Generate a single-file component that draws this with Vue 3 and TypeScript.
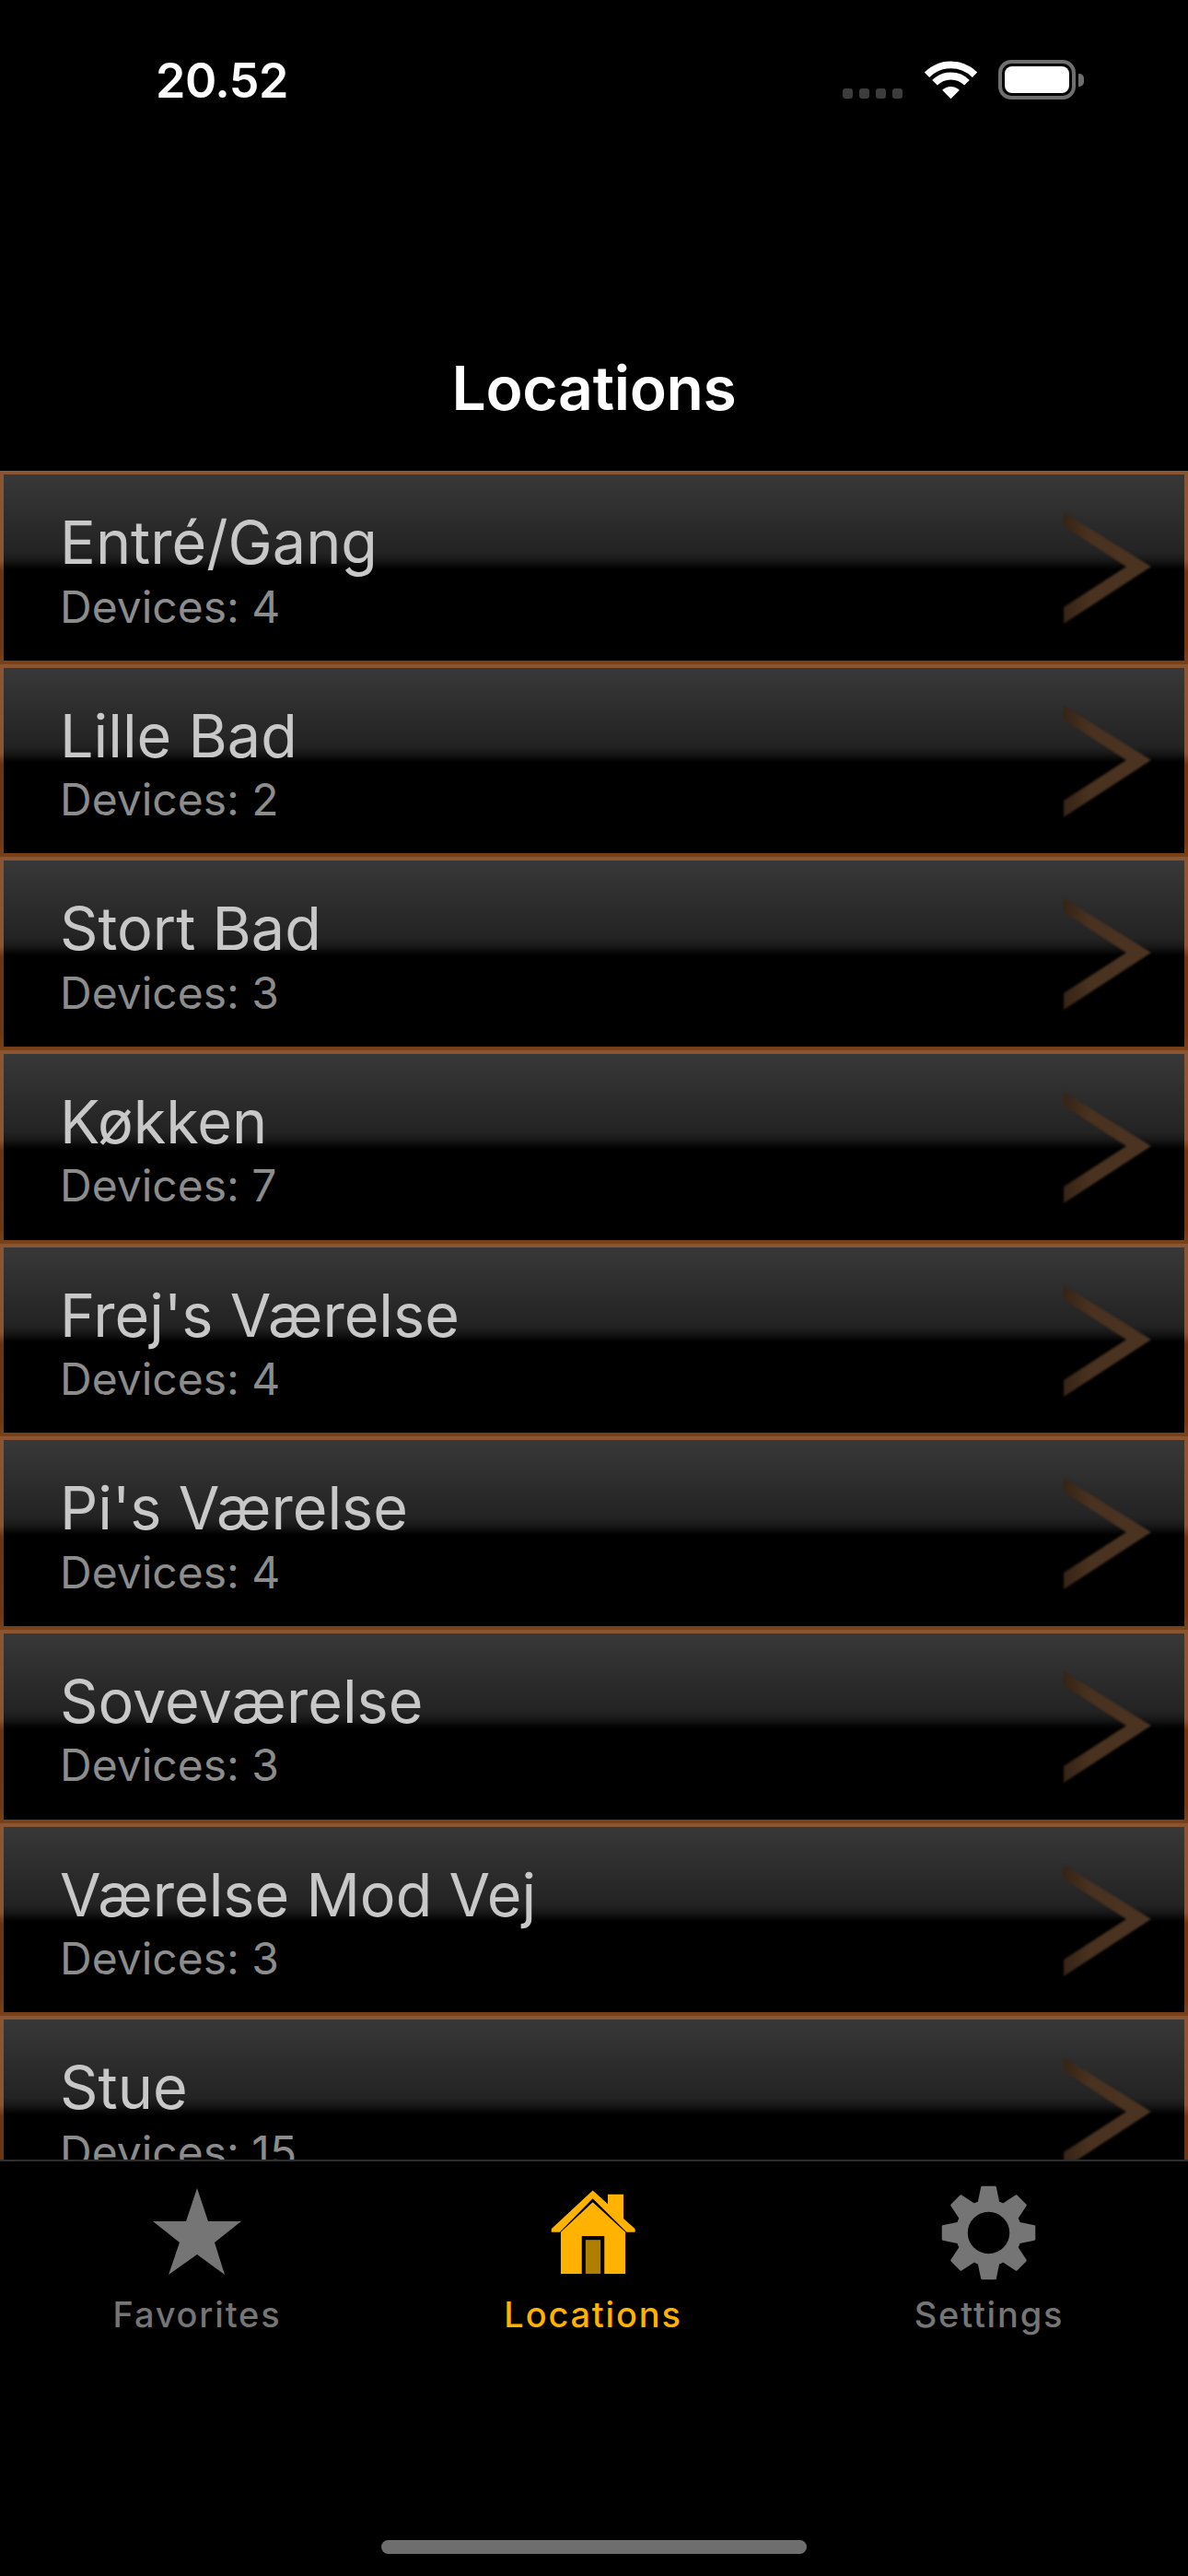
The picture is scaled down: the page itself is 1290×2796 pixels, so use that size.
<script setup lang="ts">
interface Loc { name: string; devices: number }
const locations: Loc[] = [
  { name: 'Entré/Gang', devices: 4 },
  { name: 'Lille Bad', devices: 2 },
  { name: 'Stort Bad', devices: 3 },
  { name: 'Køkken', devices: 7 },
  { name: "Frej's Værelse", devices: 4 },
  { name: "Pi's Værelse", devices: 4 },
  { name: 'Soveværelse', devices: 3 },
  { name: 'Værelse Mod Vej', devices: 3 },
  { name: 'Stue', devices: 15 },
]
const toothAngles = [0, 45, 90, 135, 180, 225, 270, 315]
</script>

<template>
  <div class="screen">
    <header class="status">
      <span class="time">20.52</span>
      <div class="indicators">
        <div class="dots"><i></i><i></i><i></i><i></i></div>
        <svg class="wifi" viewBox="372 77 172 124">
          <path d="M379.5 121.5A111 111 0 0 1 536.5 121.5" fill="none" stroke="#fff" stroke-width="23" />
          <path d="M405.3 147.3A74.5 74.5 0 0 1 510.7 147.3" fill="none" stroke="#fff" stroke-width="24" />
          <path d="M458 200L429.7 171.7A40 40 0 0 1 486.3 171.7Z" fill="#fff" />
        </svg>
        <div class="battery"><div class="charge"></div></div>
        <div class="cap"></div>
      </div>
    </header>
    <div class="nav">Locations</div>
    <main class="list">
      <div v-for="l in locations" :key="l.name" class="row">
        <div class="labels">
          <div class="name">{{ l.name }}</div>
          <div class="devices">Devices: {{ l.devices }}</div>
        </div>
        <svg class="chevron" viewBox="0 0 95 122">
          <defs>
            <linearGradient id="chev" x1="0" y1="0" x2="1" y2="0">
              <stop offset="0" stop-color="#362415" />
              <stop offset="0.3" stop-color="#49321f" />
              <stop offset="1" stop-color="#4b3421" />
            </linearGradient>
          </defs>
          <polygon points="0,0 95,59 0,121 0,103 68,59 0,15" fill="url(#chev)" />
        </svg>
      </div>
    </main>
    <nav class="tabs">
      <div class="tab">
        <svg class="tab-icon" viewBox="0 0 96 96">
          <polygon points="47,0 59,36 95,36 66,59 77,94 47,72 16,94 28,59 -1,36 35,36" fill="#757575" transform="translate(1 0)" />
        </svg>
        <span>Favorites</span>
      </div>
      <div class="tab active">
        <svg class="tab-icon" viewBox="350 165 282 282">
          <path d="M490 172L538 216V185H588V262L625 295V305H598L490 198L385 305H358V295Z" fill="#ffb300" />
          <path d="M490 210L594 305V438H527V318H455V438H388V305Z" fill="#ffb300" />
          <rect x="467" y="330" width="48" height="108" fill="#b07f00" />
        </svg>
        <span>Locations</span>
      </div>
      <div class="tab">
        <svg class="tab-icon gear" viewBox="-51 -51 102 102">
          <circle r="29" fill="none" stroke="#757575" stroke-width="13" />
          <g v-for="a in toothAngles" :key="a" :transform="`rotate(${a})`">
            <path d="M-11 -30L-7 -49H7L11 -30Z" fill="#757575" stroke="#757575" stroke-width="2.5" stroke-linejoin="round" />
          </g>
        </svg>
        <span>Settings</span>
      </div>
    </nav>
    <div class="home-indicator"></div>
  </div>
</template>

<style scoped>
.screen {
  width: 1290px;
  height: 2796px;
  background: #000;
  display: flex;
  flex-direction: column;
  overflow: hidden;
  position: relative;
  font-family: Inter, "Liberation Sans", sans-serif;
}
.status {
  height: 176px;
  flex: none;
  display: flex;
  justify-content: space-between;
  padding: 0 113px 0 169px;
  box-sizing: border-box;
}
.time {
  color: #fff;
  font-size: 52px;
  font-weight: 600;
  line-height: 63px;
  margin-top: 56px;
  letter-spacing: -0.5px;
}
.indicators {
  display: flex;
  align-items: flex-start;
  padding-top: 65px;
}
.dots {
  display: flex;
  gap: 7px;
  margin-top: 31px;
  margin-right: 24px;
}
.dots i {
  width: 11px;
  height: 11px;
  border-radius: 3px;
  background: #3c3c3c;
}
.wifi {
  width: 57px;
  height: 42px;
  margin-top: 1px;
  margin-right: 23px;
}
.battery {
  width: 84px;
  height: 43px;
  box-sizing: border-box;
  border: 4px solid #6e6e6e;
  border-radius: 14px;
  padding: 3px;
}
.charge {
  width: 100%;
  height: 100%;
  background: #fff;
  border-radius: 8px;
}
.cap {
  width: 6px;
  height: 14px;
  margin: 15px 0 0 3px;
  background: #6e6e6e;
  border-radius: 0 5px 5px 0;
}
.nav {
  height: 335px;
  flex: none;
  box-sizing: border-box;
  padding-top: 205px;
  text-align: center;
  color: #fff;
  font-size: 66px;
  font-weight: 600;
  line-height: 80px;
  letter-spacing: -0.3px;
}
.list {
  flex: 1;
  min-height: 0;
  overflow: hidden;
}
.row {
  height: 209.67px;
  box-sizing: border-box;
  border: 4px solid;
  border-image: linear-gradient(#8a5532 0%, #8a5532 46%, #6a340f 52%, #6e3812 92%, #7a4218 100%) 4;
  background: linear-gradient(#383838 0%, #232323 42%, #181818 46%, #000 51%, #000 100%);
  display: flex;
  align-items: flex-start;
  justify-content: space-between;
  padding: 0 36px 0 61px;
}
.labels {
  padding-top: 34px;
}
.name {
  color: #c8c8c8;
  font-size: 64.7px;
  line-height: 80px;
  white-space: nowrap;
}
.devices {
  color: #8c8c8c;
  font-size: 48px;
  line-height: 56px;
  white-space: nowrap;
  margin-top: 1.5px;
}
.chevron {
  width: 95px;
  height: 122px;
  margin-top: 41px;
  flex: none;
  filter: blur(1.2px);
}
.tabs {
  height: 452px;
  flex: none;
  box-sizing: border-box;
  border-top: 2px solid #2e2e2e;
  background: #000;
  display: grid;
  grid-template-columns: repeat(3, 1fr);
}
.tab {
  display: flex;
  flex-direction: column;
  align-items: center;
  color: #757575;
  font-size: 38px;
  font-weight: 500;
  line-height: 46px;
  letter-spacing: 1.8px;
  padding: 29px 2px 0 0;
}
.tab-icon {
  width: 96px;
  height: 96px;
  overflow: visible;
  margin-bottom: 18px;
}
.gear {
  width: 103px;
  height: 103px;
  margin: -3px 0 14px -2px;
}
.active {
  color: #ffb300;
}
.home-indicator {
  position: absolute;
  left: 414px;
  bottom: 24px;
  width: 462px;
  height: 15px;
  border-radius: 8px;
  background: #6e6e6e;
}
</style>
